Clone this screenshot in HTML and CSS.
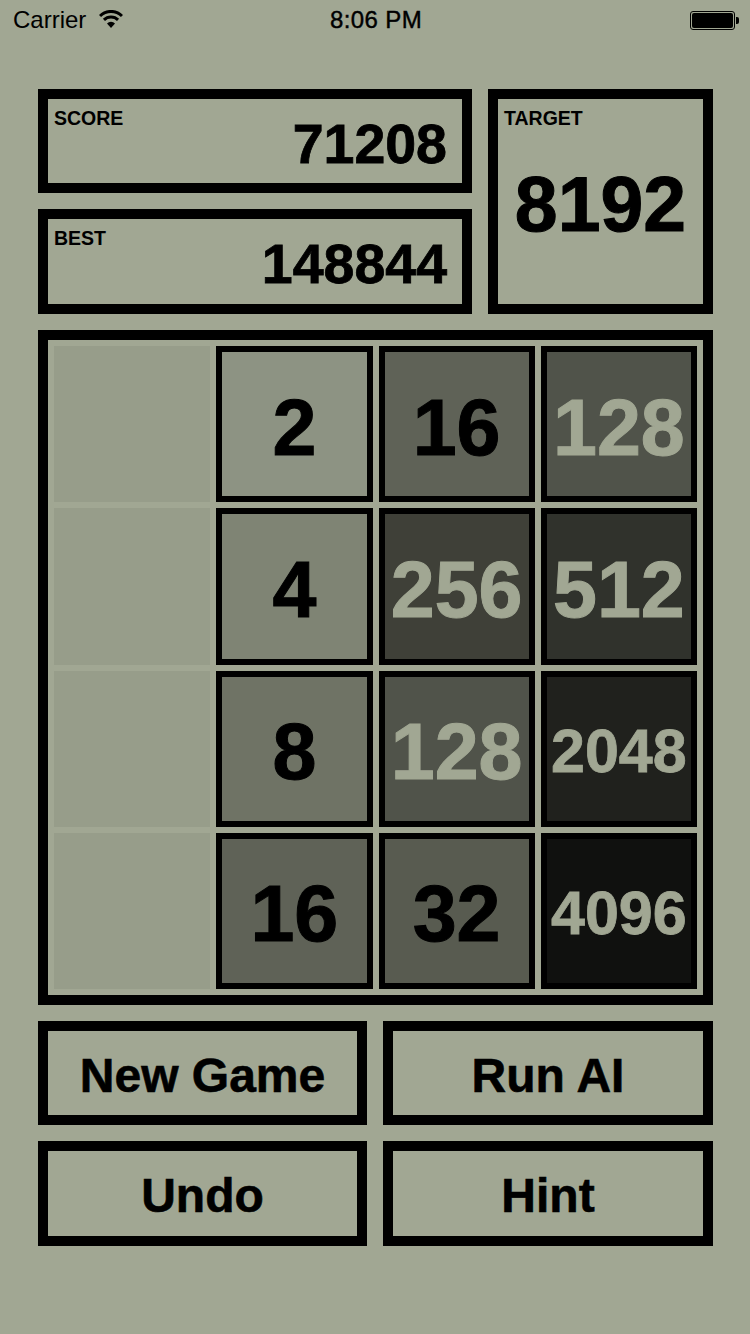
FILE: index.html
```html
<!DOCTYPE html>
<html lang="en">
<head>
    <meta charset="UTF-8">
    <meta name="viewport" content="width=device-width, initial-scale=1.0">
    <title>2048</title>
    <link rel="stylesheet" href="styles.css">
</head>
<body>

    <!-- Status bar -->
    <div class="status-bar">
        <div class="status-left">
            <span>Carrier</span>
            <svg class="wifi" width="24" height="18" viewBox="0 0 24 18">
                <path class="wifi-arc" d="M1 6 A15.5 15.5 0 0 1 23 6" />
                <path class="wifi-arc" d="M4.93 9.93 A10 10 0 0 1 19.07 9.93" />
                <path d="M12 18 L8 13.5 A5.5 5.5 0 0 1 16 13.5 Z" />
            </svg>
        </div>
        <div class="status-time">8:06 PM</div>
        <div class="status-right">
            <div class="battery"><div class="battery-fill"></div></div>
            <div class="battery-nub"></div>
        </div>
    </div>

    <main class="game">

        <!-- Scores -->
        <section class="scores">
            <div class="box score-box">
                <div class="box-label">SCORE</div>
                <div class="box-value">71208</div>
            </div>
            <div class="box score-box">
                <div class="box-label">BEST</div>
                <div class="box-value">148844</div>
            </div>
            <div class="box target-box">
                <div class="box-label">TARGET</div>
                <div class="target-value">8192</div>
            </div>
        </section>

        <!-- Board -->
        <section class="board">
            <div class="cell"></div>
            <div class="tile t2">2</div>
            <div class="tile t16">16</div>
            <div class="tile t128 light">128</div>

            <div class="cell"></div>
            <div class="tile t4">4</div>
            <div class="tile t256 light">256</div>
            <div class="tile t512 light">512</div>

            <div class="cell"></div>
            <div class="tile t8">8</div>
            <div class="tile t128 light">128</div>
            <div class="tile t2048 light small">2048</div>

            <div class="cell"></div>
            <div class="tile t16">16</div>
            <div class="tile t32">32</div>
            <div class="tile t4096 light small">4096</div>
        </section>

        <!-- Buttons -->
        <section class="actions">
            <button type="button">New Game</button>
            <button type="button">Run AI</button>
            <button type="button">Undo</button>
            <button type="button">Hint</button>
        </section>

    </main>

</body>
</html>
```

FILE: styles.css
```css
* {
    box-sizing: border-box;
}
body {
    margin: 0;
    width: 750px;
    height: 1334px;
    overflow: hidden;
    background-color: #a1a793;
    color: #000;
    font-family: "Liberation Sans", Arial, sans-serif;
}

/* Status bar */
.status-bar {
    display: grid;
    grid-template-columns: 1fr auto 1fr;
    align-items: center;
    height: 40px;
    padding: 0 11px 0 13px;
    font-size: 24px;
}
.status-left {
    display: flex;
    align-items: center;
    gap: 13px;
}
.status-time {
    letter-spacing: 0.4px;
    -webkit-text-stroke: 0.4px #000;
}
.status-right {
    display: flex;
    align-items: center;
    justify-content: flex-end;
}
.wifi {
    fill: #000;
    margin-bottom: 2px;
}
.wifi-arc {
    fill: none;
    stroke: #000;
    stroke-width: 3;
}
.battery {
    width: 45px;
    height: 19px;
    padding: 1px;
    border: 1px solid #000;
    border-radius: 3px;
}
.battery-fill {
    height: 100%;
    background-color: #000;
    border-radius: 2px;
}
.battery-nub {
    width: 3px;
    height: 7px;
    margin-left: 1px;
    background-color: #000;
    border-radius: 0 2px 2px 0;
}

.game {
    display: flex;
    flex-direction: column;
    gap: 16px;
    width: 675px;
    margin: 49px 0 0 38px;
}

/* Scores */
.scores {
    display: grid;
    grid-template-columns: 434px 225px;
    grid-template-rows: 104px 105px;
    gap: 16px;
}
.box {
    border: 10px solid #000;
    padding: 12px 15px 0 6px;
}
.box-label {
    font-size: 19.5px;
    font-weight: bold;
    line-height: 14px;
}
.box-value {
    margin-top: -1px;
    font-size: 55.5px;
    font-weight: bold;
    line-height: 40px;
    text-align: right;
    -webkit-text-stroke: 0.8px #000;
}
.target-box {
    grid-column: 2;
    grid-row: 1 / 3;
    padding-right: 6px;
}
.target-value {
    margin-top: 39px;
    font-size: 77px;
    font-weight: bold;
    line-height: 80px;
    text-align: center;
    -webkit-text-stroke: 1px #000;
}

/* Board */
.board {
    display: grid;
    grid-template-columns: repeat(4, 1fr);
    grid-auto-rows: 156.25px;
    gap: 6px;
    height: 675px;
    padding: 6px;
    border: 10px solid #000;
}
.cell {
    background-color: #979d8a;
}
.tile {
    display: flex;
    align-items: center;
    justify-content: center;
    padding-top: 6px;
    border: 6px solid #000;
    font-size: 79px;
    font-weight: bold;
    line-height: 1;
    -webkit-text-stroke: 1px #000;
}
.light {
    color: #a1a793;
    -webkit-text-stroke-color: #a1a793;
}
.small {
    font-size: 61px;
    -webkit-text-stroke-width: 0.8px;
}
.t2 { background-color: #8d9383; }
.t4 { background-color: #7f8474; }
.t8 { background-color: #6f7365; }
.t16 { background-color: #5f6257; }
.t32 { background-color: #585b50; }
.t128 { background-color: #50534a; }
.t256 { background-color: #3f4038; }
.t512 { background-color: #30322c; }
.t2048 { background-color: #20211d; }
.t4096 { background-color: #10110f; }

/* Buttons */
.actions {
    display: grid;
    grid-template-columns: 329px 330px;
    grid-template-rows: 104px 105px;
    gap: 16px;
}
button {
    padding: 4px 0 0;
    background: none;
    border: 10px solid #000;
    color: #000;
    font-family: inherit;
    font-size: 48px;
    font-weight: bold;
    -webkit-text-stroke: 0.6px #000;
    cursor: pointer;
}
```
